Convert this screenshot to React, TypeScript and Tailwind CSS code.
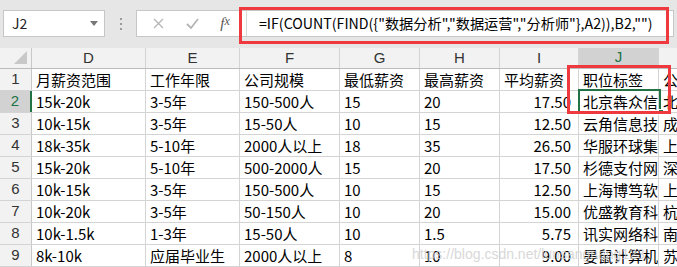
import React from "react";

const rows: string[][] = [
  ["月薪资范围", "工作年限", "公司规模", "最低薪资", "最高薪资", "平均薪资", "职位标签", "公司"],
  ["15k-20k", "3-5年", "150-500人", "15", "20", "17.50", "北京犇众信息技术", "北京"],
  ["10k-15k", "3-5年", "15-50人", "10", "15", "12.50", "云角信息技术", "成都"],
  ["18k-35k", "5-10年", "2000人以上", "18", "35", "26.50", "华服环球集团", "上海"],
  ["15k-20k", "5-10年", "500-2000人", "15", "20", "17.50", "杉德支付网络", "深圳"],
  ["10k-15k", "3-5年", "150-500人", "10", "15", "12.50", "上海博笃软件", "上海"],
  ["10k-20k", "3-5年", "50-150人", "10", "20", "15.00", "优盛教育科技", "杭州"],
  ["10k-1.5k", "1-3年", "15-50人", "10", "1.5", "5.75", "讯实网络科技", "南京"],
  ["8k-10k", "应届毕业生", "2000人以上", "8", "10", "9.00", "晏鼠计算机", "苏州"],
];

const cols = ["D", "E", "F", "G", "H", "I", "J", "K"];
const widths = ["w-[114px]", "w-[94px]", "w-[100px]", "w-[80px]", "w-[80px]", "w-[79px]", "w-[80px]", "w-[100px]"];

const font = { fontFamily: '"Noto Sans CJK SC", "Microsoft YaHei", sans-serif' };
const formula = '=IF(COUNT(FIND({"数据分析","数据运营","分析师"},A2)),B2,"")';

export default function App() {
  return (
    <div className="relative w-[677px] h-[267px] overflow-hidden bg-white text-black" style={font}>
      {/* top bar */}
      <div className="flex h-[48px] bg-[#e6e6e6] pt-[10px]">
        <div className="ml-[3px] w-[102px] h-[27px] bg-white border border-[#c6c6c6] flex items-center pl-[8px] pr-[6px] text-[14px] text-[#222]">
          <span className="flex-1">J2</span>
          <svg width="8" height="5" viewBox="0 0 8 5"><path d="M0 0 L8 0 L4 5 Z" fill="#777" /></svg>
        </div>
        <div className="w-[31px] flex flex-col items-center justify-center gap-[3px] h-[27px]">
          <div className="w-[2px] h-[2px] bg-[#9a9a9a]" />
          <div className="w-[2px] h-[2px] bg-[#9a9a9a]" />
          <div className="w-[2px] h-[2px] bg-[#9a9a9a]" />
        </div>
        <div className="flex-1 mr-[3px] h-[27px] bg-white border border-[#c6c6c6] flex items-center overflow-hidden">
          <div className="w-[34px] shrink-0 flex justify-center ml-[4px]">
            <svg width="11" height="11" viewBox="0 0 11 11"><path d="M1 1 L10 10 M10 1 L1 10" stroke="#b5b5b5" strokeWidth="1.3" /></svg>
          </div>
          <div className="w-[34px] shrink-0 flex justify-center">
            <svg width="13" height="11" viewBox="0 0 13 11"><path d="M1 6 L5 10 L12 1" stroke="#b5b5b5" strokeWidth="1.8" fill="none" /></svg>
          </div>
          <div className="w-[32px] shrink-0 flex justify-center text-[15px] italic text-[#555]" style={{ fontFamily: '"Liberation Serif", serif' }}>
            f<span className="text-[12px]">x</span>
          </div>
          <div className="h-[27px] w-px shrink-0 bg-[#d8d8d8] ml-[5px]" />
          <div className="pl-[12px] text-[14.2px] whitespace-nowrap leading-none">{formula}</div>
        </div>
      </div>

      {/* header row */}
      <div className="flex h-[21px] bg-[#f2f2f2] border-b border-[#bcbcbc]">
        <div className="relative w-[32px] shrink-0 border-r border-[#c8c8c8]">
          <svg className="absolute right-[4px] bottom-[4px]" width="13" height="13" viewBox="0 0 13 13"><path d="M13 0 L13 13 L0 13 Z" fill="#c8c8c8" /></svg>
        </div>
        {cols.map((c, i) => (
          <div
            key={c}
            className={`${widths[i]} shrink-0 border-r border-[#d4d4d4] flex items-center justify-center text-[15px] ${c === "J" ? "bg-[#d2d2d2] border-b-2 border-b-[#217346] text-[#217346]" : "text-[#333]"}`}
            style={{ fontFamily: '"Liberation Sans", sans-serif' }}
          >
            {c === "K" ? "" : c}
          </div>
        ))}
      </div>

      {/* rows */}
      {rows.map((r, ri) => (
        <div key={ri} className="flex h-[22px] border-b border-[#d4d4d4]">
          <div
            className={`w-[32px] shrink-0 flex items-center justify-center text-[15px] border-r ${ri === 1 ? "bg-[#d2d2d2] text-[#217346] border-r-2 border-r-[#217346]" : "bg-[#f2f2f2] text-[#333] border-[#c8c8c8]"}`}
            style={{ fontFamily: '"Liberation Sans", sans-serif' }}
          >
            {ri + 1}
          </div>
          {r.map((v, ci) => {
            const numeric = ri > 0 && ci === 5;
            return (
              <div
                key={ci}
                className={`shrink-0 ${widths[ci]} border-r border-[#d4d4d4] flex items-center overflow-hidden whitespace-nowrap text-[15px] leading-none ${numeric ? "justify-end pr-[7px]" : "pl-[4px]"}`}
              >
                {v}
              </div>
            );
          })}
        </div>
      ))}

      {/* selection */}
      <div className="absolute left-[578px] top-[89px] w-[83px] h-[24px] border-2 border-[#217346]" />
      <div className="absolute left-[658px] top-[109px] w-[6px] h-[6px] bg-[#217346] border border-white" />

      {/* red annotations */}
      <div className="absolute left-[239px] top-[7px] w-[430px] h-[37px] border-[3px] border-[#ee3a3f]" />
      <div className="absolute left-[567px] top-[65px] w-[104px] h-[49px] border-[3px] border-[#ee3a3f]" />

      {/* watermark */}
      <div className="absolute left-[412px] top-[244px] text-[14px] text-[#cfcfcf] opacity-80 whitespace-nowrap" style={{ fontFamily: '"Liberation Sans", sans-serif' }}>
        https://blog.csdn.net/lunsangnang123
      </div>
    </div>
  );
}
